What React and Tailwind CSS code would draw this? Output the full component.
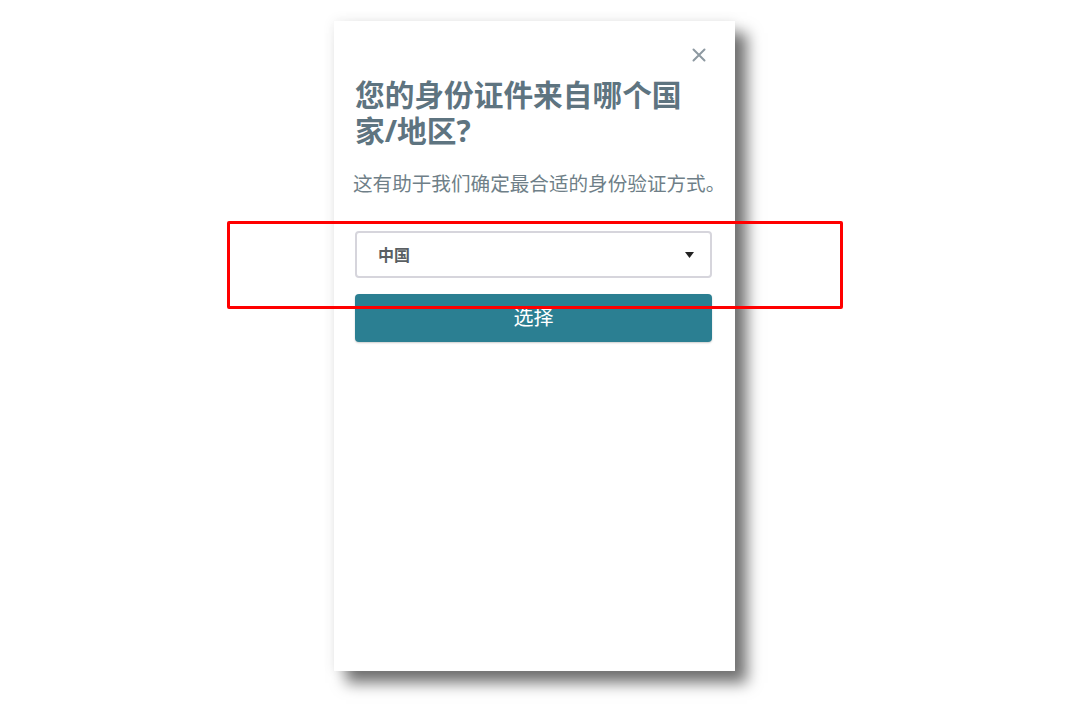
import { useState } from "react";

const font = { fontFamily: '"Noto Sans", "Noto Sans CJK SC", sans-serif' };

const App = () => {
  const [country] = useState("中国");

  return (
    <div className="relative w-full h-[710px] bg-white overflow-hidden" style={font}>
      <div className="ml-[334px] pt-[21px]">
        <div className="w-[401px] h-[650px] bg-white pl-[21px] pr-[23px] pt-[27px] shadow-[12px_12px_14px_rgba(0,0,0,0.55),0_0_12px_rgba(0,0,0,0.08)]">
          <div className="flex justify-end pr-[6px] h-[14px]">
            <svg width="14" height="14" viewBox="0 0 14 14" className="text-[#8d99a1]">
              <path d="M1.5 1.5 L12.5 12.5 M12.5 1.5 L1.5 12.5" stroke="currentColor" strokeWidth="2" strokeLinecap="round" />
            </svg>
          </div>

          <h2 className="mt-[15px] text-[29.7px] leading-[36px] font-bold text-[#5e7480] whitespace-nowrap">
            您的身份证件来自哪个国
            <br />
            家/地区?
          </h2>

          <p className="mt-[22px] text-[19.6px] leading-[26px] text-[#6f7f88] whitespace-nowrap -ml-[2px]">
            这有助于我们确定最合适的身份验证方式。
          </p>

          <div className="mt-[34px] h-[47px] border-2 border-[#d6d5dc] rounded-[4px] flex items-center justify-between pl-[21px] pr-[16px]">
            <span className="text-[16px] font-bold text-[#5a5f63]">{country}</span>
            <svg width="9" height="6" viewBox="0 0 9 6">
              <path d="M0 0 L9 0 L4.5 6 Z" fill="#222" />
            </svg>
          </div>

          <button className="mt-[16px] w-full h-[48px] rounded-[4px] bg-[#2b7f92] text-white text-[20px] flex items-center justify-center shadow-[0_1px_2px_rgba(0,0,0,0.2)]">
            选择
          </button>
        </div>
      </div>

      <div className="absolute left-[227px] top-[221px] w-[616px] h-[88px] border-[3px] border-[#ff0000] rounded-[2px] pointer-events-none" />
    </div>
  );
};

export default App;
